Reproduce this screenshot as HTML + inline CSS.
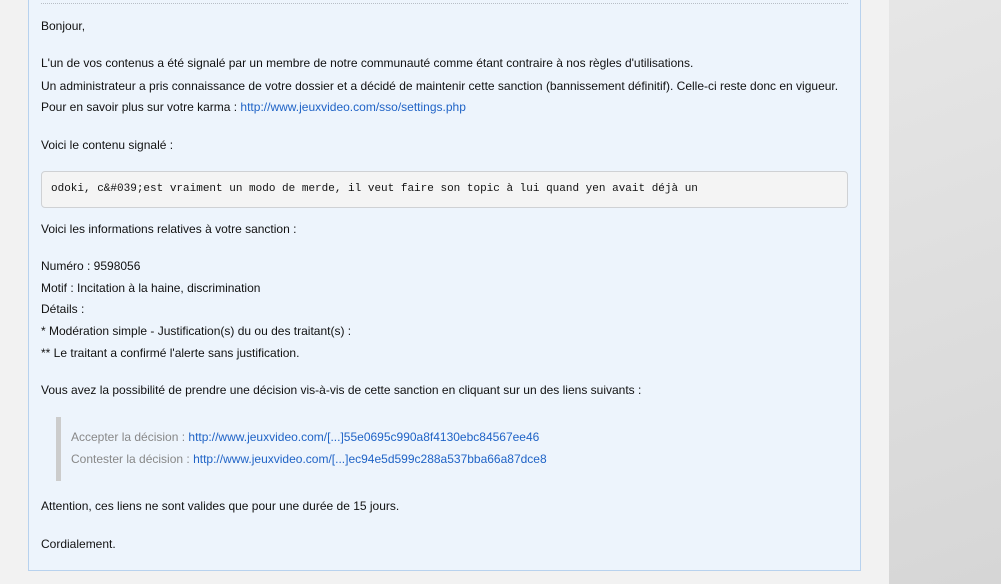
<!DOCTYPE html>
<html><head><meta charset="utf-8"><style>
html,body{margin:0;padding:0;width:1001px;height:584px;overflow:hidden;background:#f2f2f2;font-family:"Liberation Sans",Arial,sans-serif;font-size:12px;color:#111;}
.right{position:absolute;left:889px;top:0;width:112px;height:584px;background:linear-gradient(160deg,#e6e6e6,#d6d6d6);}
.panel{position:absolute;left:28px;top:-2px;width:831px;height:571px;background:#edf4fc;border:1px solid #b8d2ee;}
.dot{position:absolute;left:41px;top:3px;width:807px;border-top:1px dotted #b8bec6;}
.t{position:absolute;left:41px;white-space:nowrap;line-height:14px;}
a{color:#1f63c6;text-decoration:none;}
.code{position:absolute;left:41px;top:171px;width:805px;height:35px;background:#f4f4f4;border:1px solid #cfd1d4;border-radius:4px;}
.code span{position:absolute;left:9px;top:11px;font-family:"Liberation Mono","DejaVu Sans Mono",monospace;font-size:11px;white-space:nowrap;color:#111;}
.bq{position:absolute;left:56px;top:417px;width:5px;height:64px;background:#cccccc;}
.g{color:#888;}
</style></head><body>
<div class="right"></div>
<div class="panel"></div>
<div class="dot"></div>
<div class="t" style="top:19px">Bonjour,</div>
<div class="t" style="top:56px">L'un de vos contenus a été signalé par un membre de notre communauté comme étant contraire à nos règles d'utilisations.</div>
<div class="t" style="top:79px">Un administrateur a pris connaissance de votre dossier et a décidé de maintenir cette sanction (bannissement définitif). Celle-ci reste donc en vigueur.</div>
<div class="t" style="top:100px">Pour en savoir plus sur votre karma : <a>http://www.jeuxvideo.com/sso/settings.php</a></div>
<div class="t" style="top:138px">Voici le contenu signalé :</div>
<div class="code"><span>odoki, c&amp;#039;est vraiment un modo de merde, il veut faire son topic à lui quand yen avait déjà un</span></div>
<div class="t" style="top:222px">Voici les informations relatives à votre sanction :</div>
<div class="t" style="top:259px">Numéro : 9598056</div>
<div class="t" style="top:281px">Motif : Incitation à la haine, discrimination</div>
<div class="t" style="top:302px">Détails :</div>
<div class="t" style="top:324px">* Modération simple - Justification(s) du ou des traitant(s) :</div>
<div class="t" style="top:346px">** Le traitant a confirmé l'alerte sans justification.</div>
<div class="t" style="top:383px">Vous avez la possibilité de prendre une décision vis-à-vis de cette sanction en cliquant sur un des liens suivants :</div>
<div class="bq"></div>
<div class="t g" style="top:430px;left:71px">Accepter la décision : <a>http://www.jeuxvideo.com/[...]55e0695c990a8f4130ebc84567ee46</a></div>
<div class="t g" style="top:452px;left:71px">Contester la décision : <a>http://www.jeuxvideo.com/[...]ec94e5d599c288a537bba66a87dce8</a></div>
<div class="t" style="top:499px">Attention, ces liens ne sont valides que pour une durée de 15 jours.</div>
<div class="t" style="top:537px">Cordialement.</div>
</body></html>
